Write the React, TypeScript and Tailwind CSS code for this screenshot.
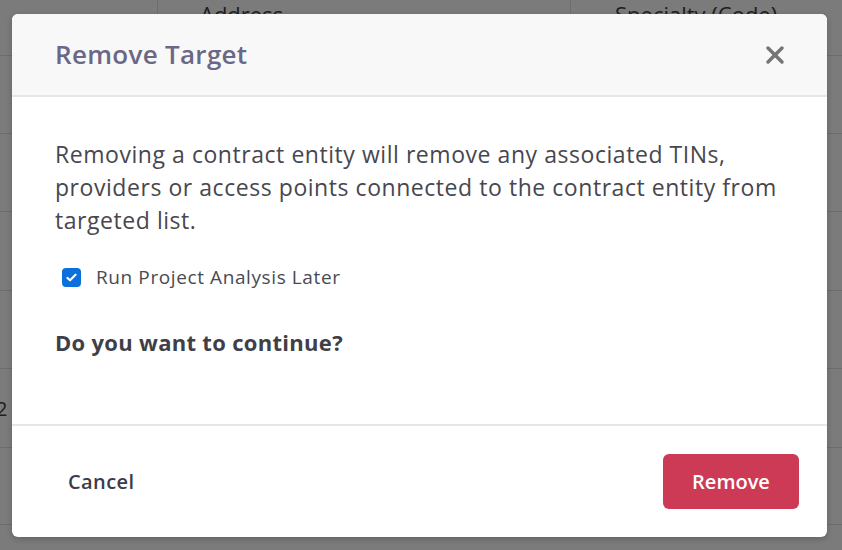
import { X } from 'lucide-react'

const rows = [55, 133, 211, 290, 368, 447, 524]

export default function App() {
  return (
    <div className="relative h-[550px] w-[842px] overflow-hidden bg-[#7b7b7b] font-['Open_Sans',sans-serif]">
      {/* table behind the overlay */}
      <div className="absolute inset-0">
        <div className="absolute left-[157px] top-0 h-[55px] w-px bg-[#6e6e6e]" />
        <div className="absolute left-[570px] top-0 h-[55px] w-px bg-[#6e6e6e]" />
        <div className="absolute left-[200px] top-[-2px] text-[22px] text-[#1e1e1e]">Address</div>
        <div className="absolute left-[615px] top-[-2px] text-[22px] text-[#1e1e1e]">Specialty (Code)</div>
        <div className="absolute left-[-4px] top-[394px] text-[20px] text-[#1e1e1e]">2</div>
        {rows.map((y) => (
          <div key={y} className="absolute left-0 h-px w-full bg-[#6c6c6c]" style={{ top: y }} />
        ))}
      </div>

      <div className="absolute left-[12px] top-[14px] flex h-[523px] w-[815px] flex-col overflow-hidden rounded-[6px] bg-white shadow-[0_2px_6px_rgba(0,0,0,0.2)]">
        <div className="flex h-[83px] shrink-0 items-center justify-between border-b-2 border-[#e6e6e6] bg-[#f8f8f8] pl-[43px] pr-[38px]">
          <h2 className="text-[26px] font-semibold tracking-[0.3px] text-[#6b6786]">Remove Target</h2>
          <X className="h-[28px] w-[28px] text-[#757575]" strokeWidth={3} />
        </div>

        <div className="flex flex-1 flex-col pl-[43px] pr-[30px] pt-[41px]">
          <p className="text-[23px] leading-[33px] tracking-[0.55px] text-[#47474f]">
            Removing a contract entity will remove any associated TINs,
            <br />
            providers or access points connected to the contract entity from targeted list.
          </p>
          <label className="mt-[26px] flex items-center gap-[15px] pl-[7px]">
            <span className="flex h-[19px] w-[19px] items-center justify-center rounded-[4px] bg-[#0b6fdc]">
              <svg viewBox="0 0 16 16" className="h-[13px] w-[13px]">
                <path d="M3 8.5l3.2 3L13 4.5" fill="none" stroke="white" strokeWidth="2.6" strokeLinecap="round" strokeLinejoin="round" />
              </svg>
            </span>
            <span className="text-[19px] tracking-[0.6px] text-[#4a4a52]">Run Project Analysis Later</span>
          </label>
          <p className="mt-[34px] text-[22px] font-bold tracking-[0.3px] text-[#3f3f47]">Do you want to continue?</p>
        </div>

        <div className="flex h-[113px] shrink-0 items-center justify-between border-t-2 border-[#e6e6e6] pl-[56px] pr-[28px]">
          <button className="text-[20px] font-semibold tracking-[0.4px] text-[#3c3c4a]">Cancel</button>
          <button className="h-[55px] w-[136px] rounded-[6px] bg-[#cc3a55] text-[20px] font-semibold text-white">
            Remove
          </button>
        </div>
      </div>
    </div>
  )
}
